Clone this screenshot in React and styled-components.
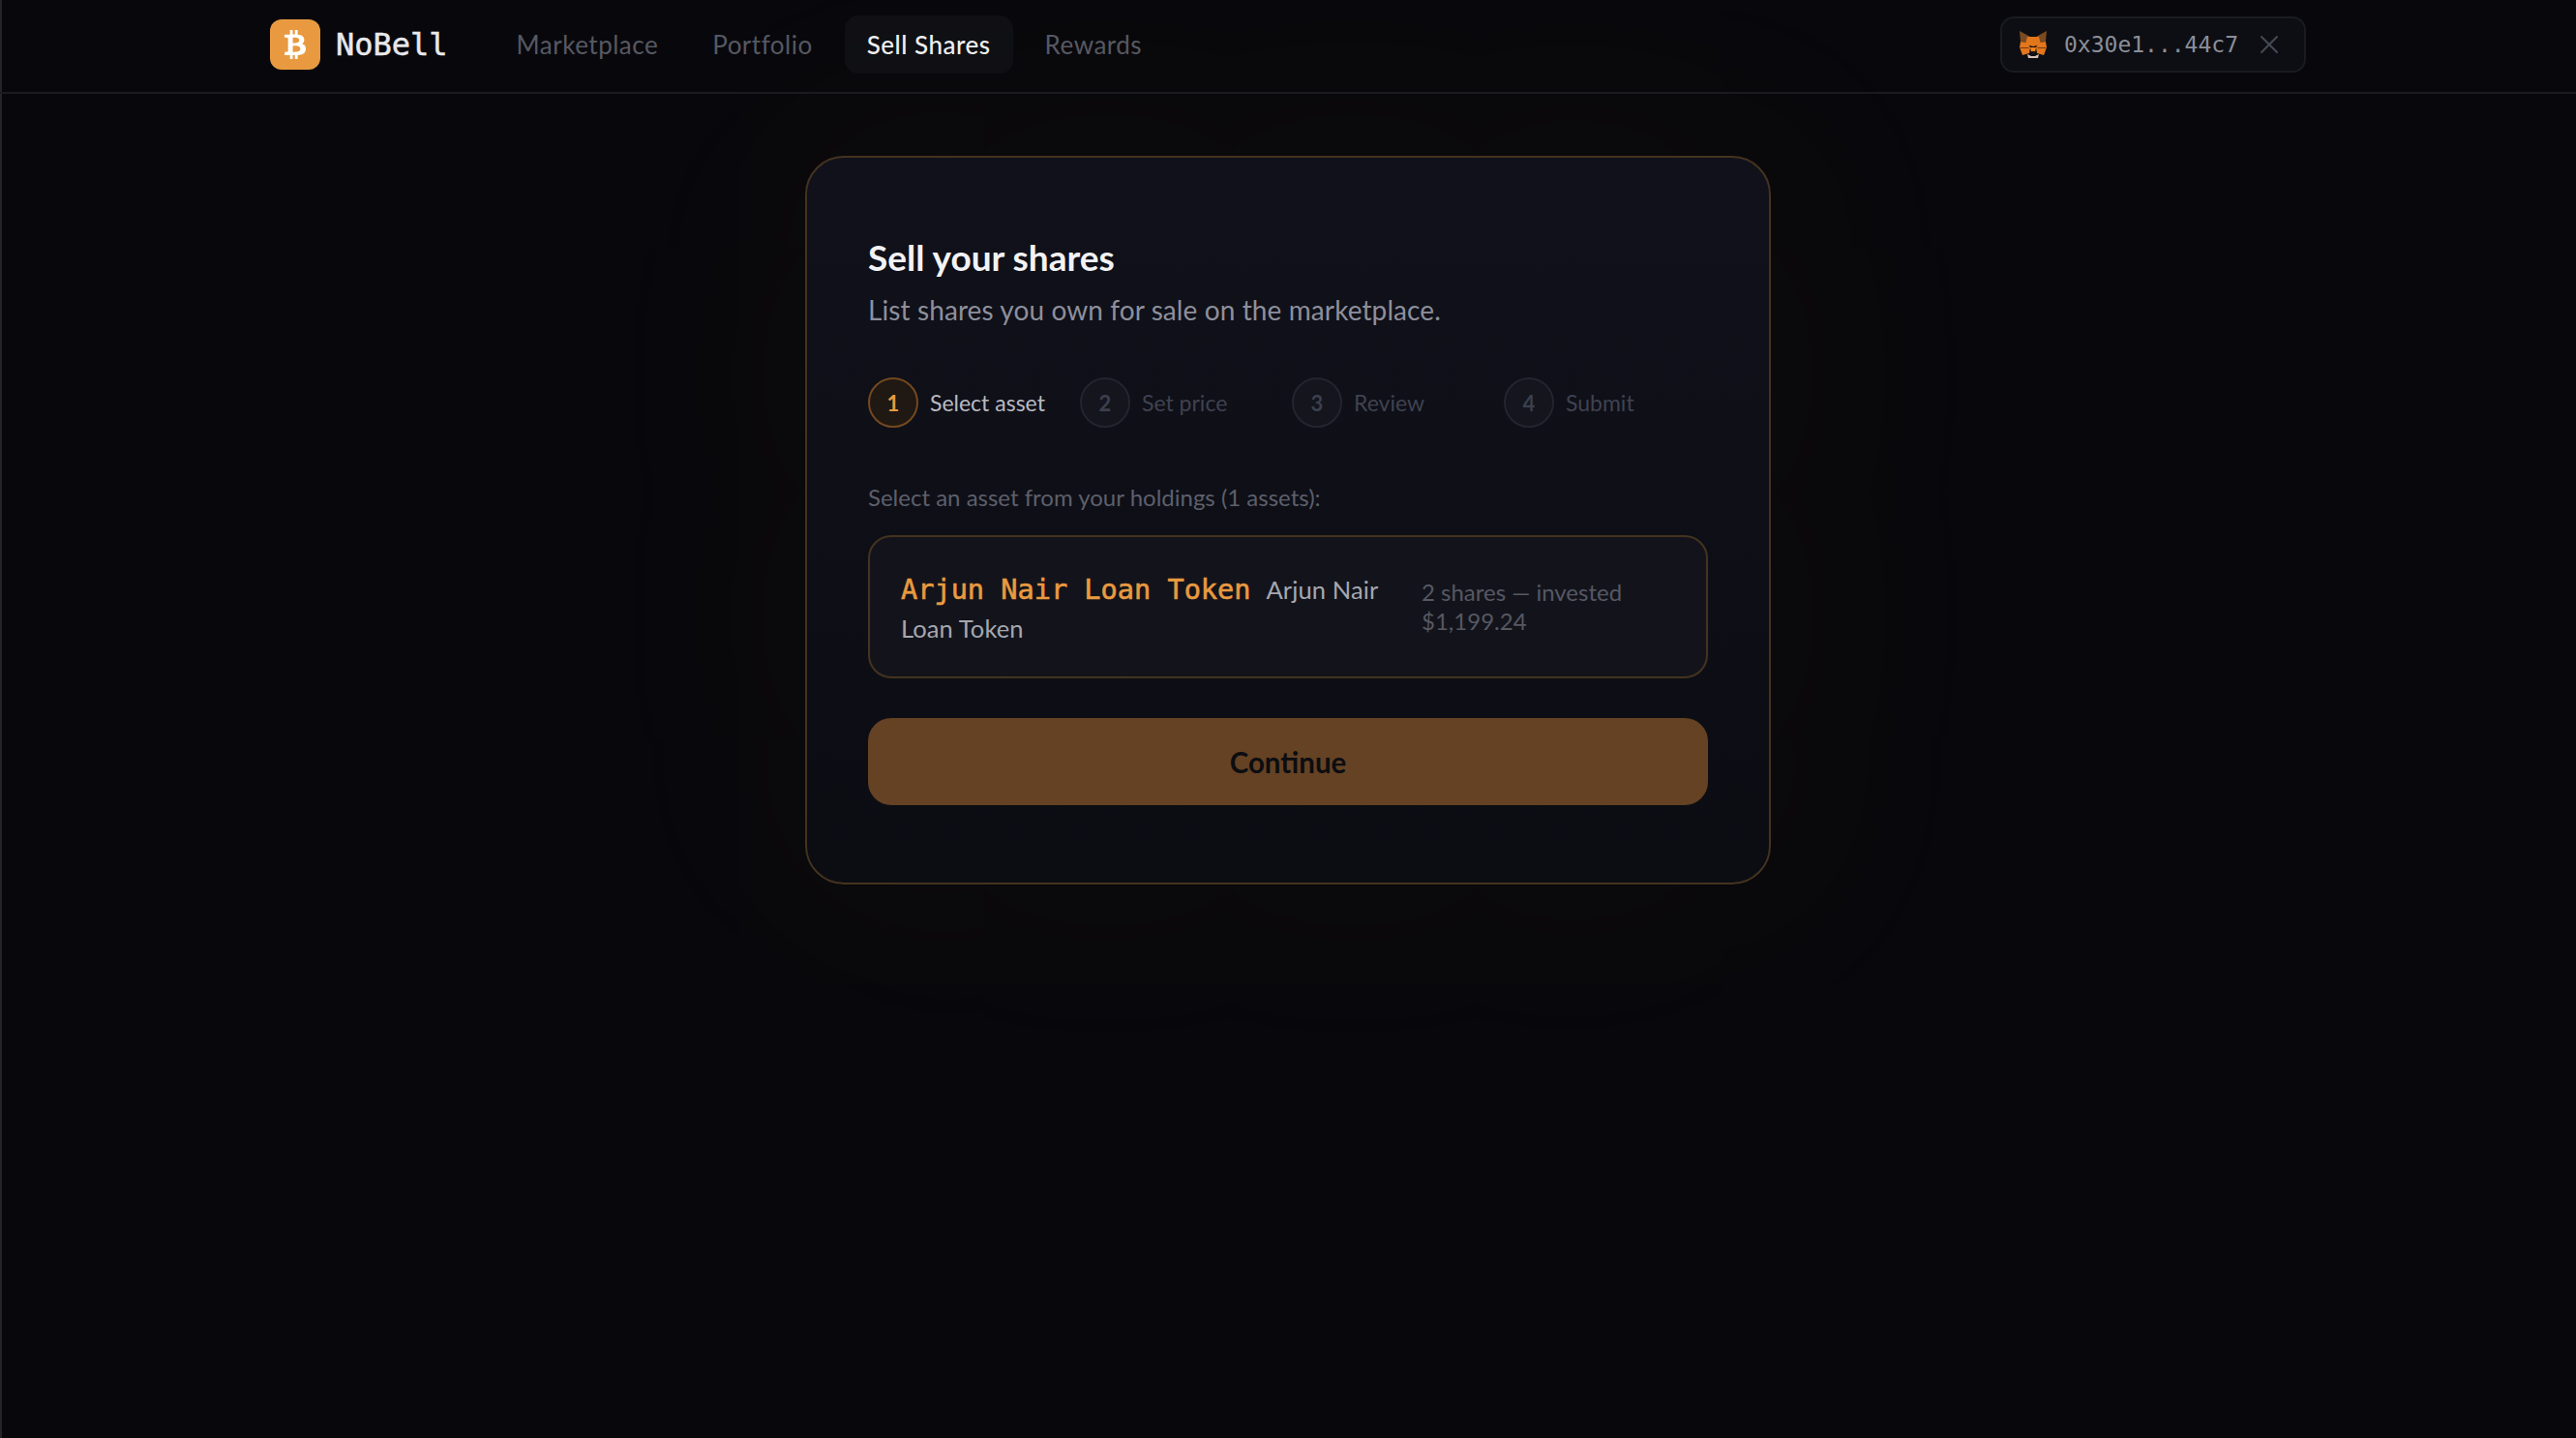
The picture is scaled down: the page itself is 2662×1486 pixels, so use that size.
import React from 'react';
import styled, { createGlobalStyle } from 'styled-components';
import { FaBtc } from 'react-icons/fa';
import { X } from 'lucide-react';

const GlobalStyle = createGlobalStyle`
    html, body {
        margin: 0;
        padding: 0;
        background: #08080c;
    }
    * {
        box-sizing: border-box;
    }
`;

const sans = `Lato, 'Open Sans', sans-serif`;
const mono = `'DejaVu Sans Mono', 'Liberation Mono', monospace`;

const Page = styled.div`
    min-height: 1486px;
    background: #08080c;
    box-shadow: inset 2px 0 0 #24242a;
    font-family: ${sans};
`;

const Nav = styled.header`
    height: 97px;
    border-bottom: 2px solid #1a1a20;
    padding: 0 279px 3px 279px;
    display: flex;
    align-items: center;
`;

const LogoMark = styled.div`
    width: 52px;
    height: 52px;
    border-radius: 12px;
    background: #e99a40;
    color: #fff;
    font-size: 30px;
    display: flex;
    align-items: center;
    justify-content: center;
`;

const Brand = styled.span`
    font-family: ${mono};
    font-size: 32px;
    -webkit-text-stroke: 0.5px #e8e8ec;
    color: #e8e8ec;
    margin-left: 16px;
    margin-right: 48px;
`;

const Links = styled.nav`
    display: flex;
    gap: 10px;
`;

const NavLink = styled.a`
    padding: 0 23px;
    height: 60px;
    display: flex;
    align-items: center;
    border-radius: 14px;
    font-size: 26px;
    letter-spacing: 0.5px;
    color: ${p => (p.$active ? '#f0f0f3' : '#565862')};
    background: ${p => (p.$active ? '#0f1015' : 'transparent')};
    font-weight: ${p => (p.$active ? 500 : 400)};
`;

const Wallet = styled.div`
    margin-left: auto;
    width: 316px;
    height: 58px;
    border: 2px solid #1a1b21;
    border-radius: 14px;
    background: #0d0e13;
    display: flex;
    align-items: center;
    padding-left: 18px;
    color: #8b8e99;
    font-family: ${mono};
    font-size: 23px;
`;

const Address = styled.span`
    margin-left: 18px;
    margin-right: 16px;
`;

const CloseIcon = styled(X)`
    color: #474a56;
`;

const Main = styled.main`
    display: flex;
    justify-content: center;
    padding-top: 64px;
`;

const Card = styled.section`
    width: 998px;
    height: 753px;
    padding: 77px 63px 0;
    border: 2px solid #44331f;
    border-radius: 40px;
    background: linear-gradient(180deg, #10111a 0%, #0c0d13 100%);
    box-shadow: 0 0 260px 40px rgba(233, 154, 64, 0.035);
`;

const Title = styled.h1`
    margin: 0;
    font-size: 37px;
    line-height: 52px;
    font-weight: 700;
    color: #f2f2f5;
`;

const Subtitle = styled.p`
    margin: 6px 0 0;
    font-size: 28px;
    line-height: 44px;
    letter-spacing: 0.1px;
    color: #8d8f9c;
`;

const Steps = styled.div`
    margin-top: 48px;
    display: grid;
    grid-template-columns: repeat(4, 185px);
    column-gap: 34px;
`;

const Step = styled.div`
    display: flex;
    align-items: center;
    gap: 12px;
    white-space: nowrap;
`;

const StepDot = styled.div`
    width: 52px;
    height: 52px;
    border-radius: 50%;
    flex: none;
    display: flex;
    align-items: center;
    justify-content: center;
    font-size: 22px;
    font-weight: 700;
    border: 2px solid ${p => (p.$active ? '#74481f' : '#23252e')};
    background: ${p => (p.$active ? '#1f1813' : '#14151d')};
    color: ${p => (p.$active ? '#e99a40' : '#3c3f4d')};
`;

const StepLabel = styled.span`
    font-size: 23px;
    color: ${p => (p.$active ? '#b9bac2' : '#3f4250')};
`;

const HoldingsLabel = styled.p`
    margin: 54px 0 0;
    font-size: 24px;
    line-height: 36px;
    color: #5d5f6b;
`;

const AssetCard = styled.div`
    margin-top: 21px;
    height: 148px;
    border: 2px solid #44331f;
    border-radius: 24px;
    background: #13141b;
    padding: 0 32px;
    display: grid;
    grid-template-columns: 498px 1fr;
    column-gap: 40px;
    align-items: center;
`;

const AssetName = styled.div`
    padding-top: 3px;
    font-size: 25.5px;
    line-height: 40px;
    letter-spacing: 0.1px;
    color: #a5a7b1;
`;

const Symbol = styled.span`
    font-family: ${mono};
    font-size: 28.6px;
    -webkit-text-stroke: 0.6px #e99a40;
    letter-spacing: 0;
    color: #e99a40;
    margin-right: 16px;
`;

const AssetMeta = styled.div`
    width: 220px;
    font-size: 24px;
    line-height: 30px;
    color: #565863;
`;

const ContinueButton = styled.button`
    display: block;
    width: 100%;
    height: 90px;
    margin-top: 41px;
    border: 0;
    border-radius: 24px;
    background: #644223;
    color: #0c0d11;
    font-family: ${sans};
    font-size: 29.5px;
    font-weight: 700;
`;

function FoxIcon() {
    return (
        <svg width="28" height="28" viewBox="0 0 28 28">
            <polygon points="0,0 11,6 8,12 1,11" fill="#7a4a20" />
            <polygon points="28,0 17,6 20,12 27,11" fill="#7a4a20" />
            <polygon points="8,6 20,6 22,14 14,16 6,14" fill="#e2761b" />
            <polygon points="1,11 8,12 11,17 10,23 3,25 0,17" fill="#e4761b" />
            <polygon points="27,11 20,12 17,17 18,23 25,25 28,17" fill="#e4761b" />
            <polygon points="0,17 9,17 10,18 1,18" fill="#763d16" />
            <polygon points="28,17 19,17 18,18 27,18" fill="#763d16" />
            <polygon points="11,17 17,17 16,22 12,22" fill="#f6851b" />
            <polygon points="12,21 16,21 15.5,24 12.5,24" fill="#161616" />
            <polygon points="8,24 12,26 16,26 20,24 19,28 9,28" fill="#d7c1b3" />
        </svg>
    );
}

const stepNames = ['Select asset', 'Set price', 'Review', 'Submit'];
const navNames = ['Marketplace', 'Portfolio', 'Sell Shares', 'Rewards'];

export default function App() {
    return (
        <Page>
            <GlobalStyle />
            <Nav>
                <LogoMark><FaBtc /></LogoMark>
                <Brand>NoBell</Brand>
                <Links>
                    {navNames.map(name => (
                        <NavLink key={name} $active={name === 'Sell Shares'}>{name}</NavLink>
                    ))}
                </Links>
                <Wallet>
                    <FoxIcon />
                    <Address>0x30e1...44c7</Address>
                    <CloseIcon size={32} strokeWidth={1.5} />
                </Wallet>
            </Nav>
            <Main>
                <Card>
                    <Title>Sell your shares</Title>
                    <Subtitle>List shares you own for sale on the marketplace.</Subtitle>
                    <Steps>
                        {stepNames.map((name, i) => (
                            <Step key={name}>
                                <StepDot $active={i === 0}>{i + 1}</StepDot>
                                <StepLabel $active={i === 0}>{name}</StepLabel>
                            </Step>
                        ))}
                    </Steps>
                    <HoldingsLabel>Select an asset from your holdings (1 assets):</HoldingsLabel>
                    <AssetCard>
                        <AssetName>
                            <Symbol>Arjun Nair Loan Token</Symbol>
                            Arjun Nair Loan Token
                        </AssetName>
                        <AssetMeta>2 shares — invested $1,199.24</AssetMeta>
                    </AssetCard>
                    <ContinueButton>Continue</ContinueButton>
                </Card>
            </Main>
        </Page>
    );
}
